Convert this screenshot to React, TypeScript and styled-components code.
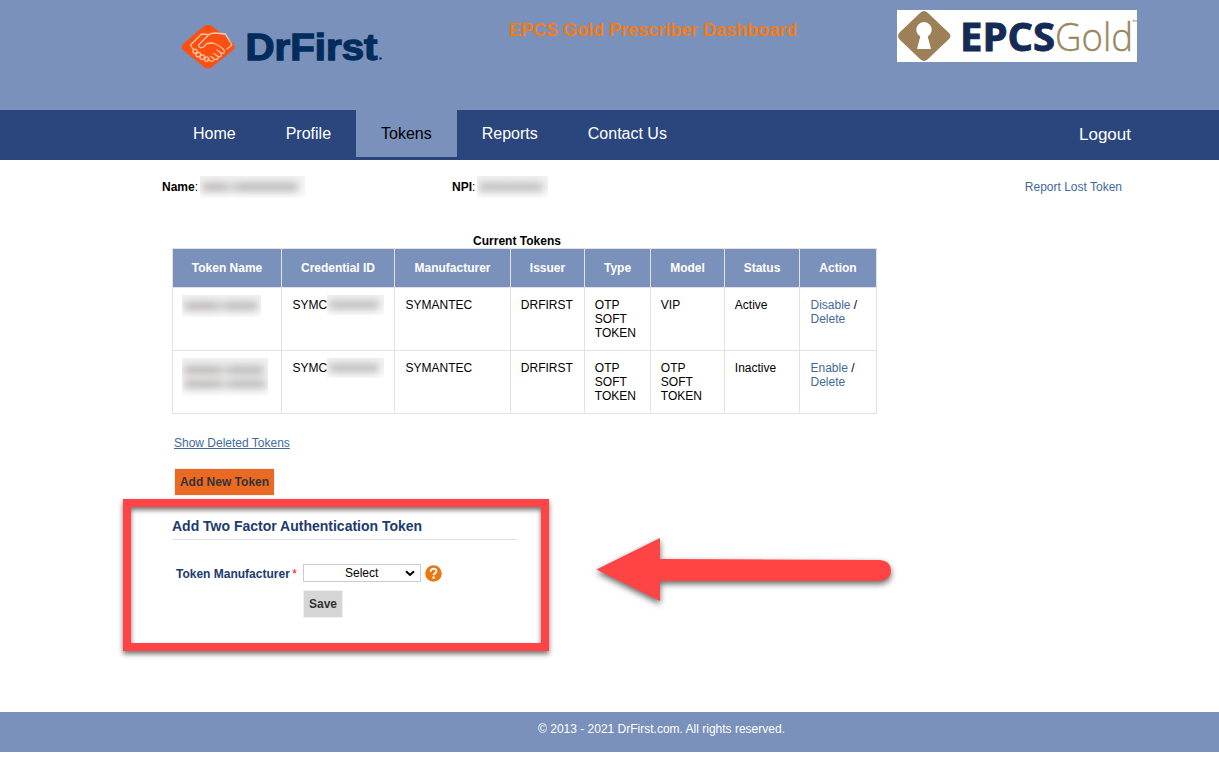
import React from "react";
import styled, { createGlobalStyle } from "styled-components";

const GlobalStyle = createGlobalStyle`
  * { box-sizing: border-box; }
  body {
    margin: 0;
    background: #fff;
    color: #000;
    font: 12px/14px "Liberation Sans", Arial, sans-serif;
  }
`;

const Page = styled.div`
  position: relative;
  width: 1219px;
  height: 773px;
  overflow: hidden;
`;

const Header = styled.header`
  display: flex;
  align-items: flex-start;
  height: 110px;
  background: #7a91bb;
`;

const BrandLogo = styled.svg`
  flex: none;
  margin: 20px 0 0 180px;
`;

const Title = styled.h1`
  flex: none;
  width: 290px;
  margin: 19px 0 0 119px;
  font-size: 18px;
  line-height: 22px;
  white-space: nowrap;
  color: #f57c14;
`;

const ProductLogo = styled.svg`
  flex: none;
  margin: 10px 0 0 98px;
`;

const Nav = styled.nav`
  display: flex;
  align-items: flex-start;
  height: 50px;
  padding: 0 88px 0 168px;
  background: #2b467c;
`;

const NavItem = styled.a<{ $active?: boolean; $end?: boolean }>`
  height: 47px;
  padding: ${(p) => (p.$end ? "0" : "0 25px")};
  margin-left: ${(p) => (p.$end ? "auto" : "0")};
  font-size: ${(p) => (p.$end ? "17px" : "16px")};
  line-height: ${(p) => (p.$end ? "49px" : "47px")};
  color: ${(p) => (p.$active ? "#000" : "#fff")};
  background: ${(p) => (p.$active ? "#7a91bb" : "transparent")};
`;

const Main = styled.main`
  height: 552px;
  padding-top: 16px;
`;

const Info = styled.div`
  display: flex;
  height: 58px;
  padding: 0 97px 0 162px;
  line-height: 22px;
`;

const Field = styled.div<{ $width: number }>`
  display: flex;
  gap: 1.5px;
  width: ${(p) => p.$width}px;
  white-space: nowrap;
`;

const Redacted = styled.span<{ $w: number; $h: number }>`
  display: flex;
  flex: none;
  flex-direction: column;
  justify-content: center;
  gap: 6px;
  width: ${(p) => p.$w}px;
  height: ${(p) => p.$h}px;
  overflow: hidden;
  background: linear-gradient(#f2f2f2, #fcfcfc);
`;

const Smear = styled.span<{ $w: number; $split?: number }>`
  flex: none;
  width: ${(p) => p.$w}px;
  height: 8px;
  margin-left: 2px;
  filter: blur(4px);
  background: ${(p) =>
    p.$split
      ? `linear-gradient(90deg, #b4aeae ${p.$split - 6}%, #d8d8d8 ${p.$split}%, #b0b0b0 ${p.$split + 8}%)`
      : "#b4b4b4"};
`;

const Link = styled.a<{ $underline?: boolean }>`
  color: #43699b;
  text-decoration: ${(p) => (p.$underline ? "underline" : "none")};
`;

const LostLink = styled(Link)`
  margin-left: auto;
`;

const TableTitle = styled.h2`
  width: 690px;
  height: 14px;
  margin: 0 0 0 172px;
  font-size: 12px;
  line-height: 14px;
  text-align: center;
`;

const Table = styled.table`
  width: 705px;
  margin-left: 172px;
  table-layout: fixed;
  border-collapse: separate;
  border-spacing: 0;
  border: solid #e2e2e2;
  border-width: 1px 0 0 1px;
`;

const HeadCell = styled.th<{ $w: number }>`
  width: ${(p) => p.$w}px;
  height: 39px;
  padding: 0;
  color: #fff;
  background: #7a91bb;
  border: solid #e2e2e2;
  border-width: 0 1px 1px 0;
`;

const Cell = styled.td<{ $tight?: boolean }>`
  height: 63px;
  padding: 10px 0 0 ${(p) => (p.$tight ? 9.8 : 10.5)}px;
  vertical-align: top;
  white-space: pre-line;
  border: solid #e2e2e2;
  border-width: 0 1px 1px 0;
`;

const NameCell = styled(Cell)`
  padding: 7px 0 0 9px;
`;

const Credential = styled.div`
  display: flex;
  height: 20px;
  margin-top: -3px;
  line-height: 20px;
`;

const Actions = styled.div`
  display: flex;
  flex-direction: column;
  align-items: flex-start;
  padding: 22px 0 0 174px;
`;

const Button = styled.button<{ $primary?: boolean }>`
  height: 28px;
  width: ${(p) => (p.$primary ? 101 : 40)}px;
  padding: 0;
  font: bold 12px/14px "Liberation Sans", Arial, sans-serif;
  color: #333;
  white-space: nowrap;
  background: ${(p) => (p.$primary ? "#eb6a23" : "#d6d6d6")};
  border: 1px solid #eef0f3;
  border-radius: 0;
`;

const AddButton = styled(Button)`
  margin-top: 18px;
`;

const Callout = styled.section`
  width: 426px;
  height: 152px;
  margin: 3px 0 0 123px;
  padding: 10px 24px 0 41px;
  border: 8px solid #fe4444;
  box-shadow: 0 3px 5px rgba(0, 0, 0, 0.55), inset 0 3px 5px rgba(0, 0, 0, 0.55);
`;

const CalloutTitle = styled.h3`
  height: 23px;
  margin: 0;
  font-size: 14px;
  line-height: 18px;
  color: #203a6e;
  border-bottom: 1px solid #e2e2e2;
`;

const FormGrid = styled.div`
  display: grid;
  grid-template-columns: 127px 118px 17px;
  column-gap: 4px;
  row-gap: 8px;
  align-items: center;
  padding-top: 24px;
  width: max-content;
`;

const Label = styled.label`
  padding: 1px 0 0 4px;
  font-weight: bold;
  white-space: nowrap;
  color: #203a6e;
`;

const Required = styled.span`
  margin-left: -1px;
  font-weight: normal;
  color: #f00;
`;

const SelectBox = styled.div`
  display: flex;
  align-items: center;
  height: 18px;
  padding: 0 5px 0 41px;
  justify-content: space-between;
  border: 1px solid #ccc;
  line-height: 16px;
`;

const SaveButton = styled(Button)`
  grid-column: 2;
`;

const Arrow = styled.svg`
  position: absolute;
  left: 585px;
  top: 528.5px;
  filter: drop-shadow(0 3px 3px rgba(0, 0, 0, 0.6));
`;

const Footer = styled.footer`
  height: 40px;
  padding: 10px 0 0 104px;
  text-align: center;
  color: #fff;
  background: #7a91bb;
`;

const columns: [string, number][] = [
  ["Token Name", 109],
  ["Credential ID", 113],
  ["Manufacturer", 116],
  ["Issuer", 74],
  ["Type", 66],
  ["Model", 74],
  ["Status", 75],
  ["Action", 77],
];

const tokens = [
  { model: "VIP", status: "Active", action: "Disable", lines: [74], width: 79, height: 22 },
  { model: "OTP\nSOFT\nTOKEN", status: "Inactive", action: "Enable", lines: [80, 82], width: 86, height: 38 },
];

function DrFirstLogo() {
  return (
    <BrandLogo width="210" height="54" viewBox="0 0 210 54">
      <path d="M24 6Q28 4 32 6L53 23Q56 27 53 30L32 47Q28 50 24 47L3 30Q1 27 3 24Z" fill="#fc5010" />
      <g fill="none" stroke="#ffc4a4" strokeWidth="1.3" strokeLinecap="round" strokeLinejoin="round">
        <path d="M20.500 25.500 30 16c2-2 4-2 7-2l10 1 6.500 11-5 4" transform="translate(-1.500 -1)" />
        <path d="M28 14.500 21.500 14 10.500 25l3 5" />
        <path d="M19 24.500c-1.500 3 2 4 4.500 2.500l3.500-3.500 6-.5c5 2 9 4.500 11 7 1.500 3-1 4-3 3l-4-3" />
        <path d="M41 33c1.500 3-1 4.500-3 3.500l-4-3M38 36.500c.5 3-2 3.500-4 2.500l-3-2.500M34 39c0 2.500-2.500 3-4.500 1.500l-2-1" />
        <path d="M13.500 30c-1.500 3 1 4.500 3 2.500 1.500-2.500-.5-4.500-3-2.500ZM16.500 33.500c-1.500 3 1 4.500 3.500 2.500 2-2.500-1-5-3.500-2.500ZM20.500 36c-1.500 3 1 4.500 3.500 2.500 2-2.500-1-5-3.500-2.500ZM25 38c-1.500 3 1 4.500 3.500 2.500 1.500-2.500-1-5-3.500-2.500Z" />
      </g>
      <text x="65.500" y="40.300" fill="#022c5c" stroke="#022c5c" strokeWidth="1.3" fontFamily="Liberation Sans" fontWeight="bold" fontSize="36.500" textLength="132" lengthAdjust="spacingAndGlyphs">DrFirst</text>
      <circle cx="200.500" cy="38.500" r="1.200" fill="#022c5c" />
    </BrandLogo>
  );
}

function EpcsGoldLogo() {
  return (
    <ProductLogo width="240" height="52" viewBox="0 0 240 52">
      <rect width="240" height="52" fill="#fff" />
      <path d="M23 3Q27 -1 31 3L51 22Q56 26 51 30L31 49Q27 53 23 49L3 30Q-1 26 3 22Z" fill="#9c8158" />
      <path d="M20 39 23.300 26.500A7.700 7.700 0 1 1 30.700 26.500L34 39Z" fill="#fff" />
      <text x="63" y="41" fill="#142b56" stroke="#142b56" strokeWidth=".9" fontFamily="Open Sans" fontWeight="bold" fontSize="39" textLength="95" lengthAdjust="spacingAndGlyphs">EPCS</text>
      <text x="158" y="41" fill="#9a865f" stroke="#9a865f" strokeWidth=".4" fontFamily="Open Sans" fontWeight="300" fontSize="39" textLength="78" lengthAdjust="spacingAndGlyphs">Gold</text>
      <path d="M235.500 10h1.500m-.75 0v2m1.500 0v-2l.75 1 .75-1v2" fill="none" stroke="#a08c68" strokeWidth=".6" />
    </ProductLogo>
  );
}

export default function App() {
  return (
    <Page>
      <GlobalStyle />
      <Header>
        <DrFirstLogo />
        <Title>EPCS Gold Prescriber Dashboard</Title>
        <EpcsGoldLogo />
      </Header>
      <Nav>
        <NavItem>Home</NavItem>
        <NavItem>Profile</NavItem>
        <NavItem $active>Tokens</NavItem>
        <NavItem>Reports</NavItem>
        <NavItem>Contact Us</NavItem>
        <NavItem $end>Logout</NavItem>
      </Nav>
      <Main>
        <Info>
          <Field $width={290}>
            <span><b>Name</b>:</span>
            <Redacted $w={105} $h={22}><Smear $w={96} $split={30} /></Redacted>
          </Field>
          <Field $width={200}>
            <span><b>NPI</b>:</span>
            <Redacted $w={71} $h={22}><Smear $w={64} /></Redacted>
          </Field>
          <LostLink>Report Lost Token</LostLink>
        </Info>
        <TableTitle>Current Tokens</TableTitle>
        <Table>
          <thead>
            <tr>{columns.map(([name, w]) => <HeadCell key={name} $w={w}>{name}</HeadCell>)}</tr>
          </thead>
          <tbody>
            {tokens.map((t) => (
              <tr key={t.status}>
                <NameCell>
                  <Redacted $w={t.width} $h={t.height}>
                    {t.lines.map((w) => <Smear key={w} $w={w} $split={50} />)}
                  </Redacted>
                </NameCell>
                <Cell>
                  <Credential>SYMC<Redacted $w={57} $h={20}><Smear $w={50} /></Redacted></Credential>
                </Cell>
                <Cell>SYMANTEC</Cell>
                <Cell $tight>DRFIRST</Cell>
                <Cell $tight>{"OTP\nSOFT\nTOKEN"}</Cell>
                <Cell $tight>{t.model}</Cell>
                <Cell $tight>{t.status}</Cell>
                <Cell><Link>{t.action}</Link> /<br /><Link>Delete</Link></Cell>
              </tr>
            ))}
          </tbody>
        </Table>
        <Actions>
          <Link $underline>Show Deleted Tokens</Link>
          <AddButton $primary>Add New Token</AddButton>
        </Actions>
        <Callout>
          <CalloutTitle>Add Two Factor Authentication Token</CalloutTitle>
          <FormGrid>
            <Label>Token Manufacturer <Required>*</Required></Label>
            <SelectBox>
              Select
              <svg width="10" height="7" viewBox="0 0 10 7"><path d="m1 1.300 4 3.700 4-3.700" fill="none" stroke="#000" strokeWidth="2" /></svg>
            </SelectBox>
            <svg width="17" height="17" viewBox="0 0 17 17">
              <circle cx="8.500" cy="8.500" r="8.300" fill="#ec7710" />
              <path d="M5.700 6.700c0-4 5.700-3.500 5.700-.4 0 2.200-2.800 2-2.800 4" fill="none" stroke="#fff" strokeWidth="2" />
              <rect x="7.500" y="11.500" width="2.200" height="2.200" fill="#fff" />
            </svg>
            <SaveButton>Save</SaveButton>
          </FormGrid>
        </Callout>
      </Main>
      <Footer>© 2013 - 2021 DrFirst.com. All rights reserved.</Footer>
      <Arrow width="320" height="90" viewBox="0 0 320 90">
        <path d="M11.500 40.500 75 9V30L295 31Q306 32 306 41.500T295 52H75V72Z" fill="#fe4444" />
      </Arrow>
    </Page>
  );
}
